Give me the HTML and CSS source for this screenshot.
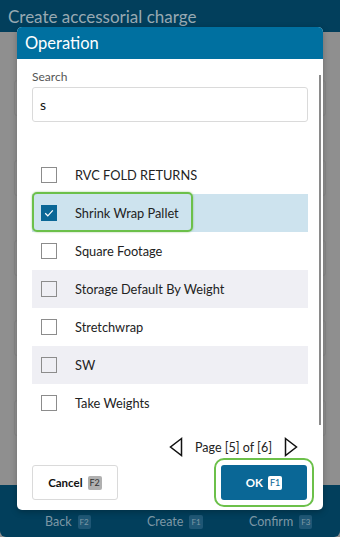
FILE: index.html
```html
<!DOCTYPE html>
<html lang="en">
<head>
<meta charset="UTF-8" />
<meta name="viewport" content="width=device-width, initial-scale=1" />
<title>Create accessorial charge</title>
<link rel="stylesheet" href="styles.css">
</head>
<body>

<div class="app">
  <header class="topbar">Create accessorial charge</header>
  <main class="page">
    <div class="ghost-field"></div>
    <div class="ghost-field"></div>
    <div class="ghost-field"></div>
    <div class="ghost-field"></div>
    <div class="ghost-field"></div>
  </main>
  <footer class="bottombar">
    <div class="nav-item"><span class="nav-dot"></span>Back <span class="nav-key">F2</span></div>
    <div class="nav-item"><span class="nav-dot"></span>Create <span class="nav-key">F1</span></div>
    <div class="nav-item"><span class="nav-dot"></span>Confirm <span class="nav-key">F3</span></div>
  </footer>
</div>

<div class="dialog">
  <div class="dialog-title">Operation</div>
  <div class="dialog-body">
    <div class="scrollbar"></div>
    <label class="field-label" for="search">Search</label>
    <input class="search" id="search" type="text" value="s">

    <ul class="options">
      <li class="option"><span class="box"></span>RVC FOLD RETURNS</li>
      <li class="option selected">
        <span class="box checked">
          <svg width="16" height="16" viewBox="0 0 16 16"><path d="M4.2 8.3 L6.8 10.8 L11.8 5.4" fill="none" stroke="#fff" stroke-width="1.2"/></svg>
        </span>Shrink Wrap Pallet
        <span class="focus-ring"></span>
      </li>
      <li class="option"><span class="box"></span>Square Footage</li>
      <li class="option alt"><span class="box"></span>Storage Default By Weight</li>
      <li class="option"><span class="box"></span>Stretchwrap</li>
      <li class="option alt"><span class="box"></span>SW</li>
      <li class="option"><span class="box"></span>Take Weights</li>
    </ul>

    <div class="pager">
      <svg width="14" height="20" viewBox="0 0 14 20"><path d="M12.5 1.5 L1.5 10 L12.5 18.5 Z" fill="none" stroke="#111" stroke-width="1.5" stroke-linejoin="miter"/></svg>
      <span class="pager-text">Page [5] of [6]</span>
      <svg width="14" height="20" viewBox="0 0 14 20"><path d="M1.5 1.5 L12.5 10 L1.5 18.5 Z" fill="none" stroke="#111" stroke-width="1.5" stroke-linejoin="miter"/></svg>
    </div>

    <div class="actions">
      <button class="btn btn-cancel">Cancel <span class="key key-grey">F2</span></button>
      <button class="btn btn-ok">OK <span class="key key-white">F1</span></button>
    </div>
  </div>
</div>

</body>
</html>
```

FILE: styles.css
```css
body { margin: 0; font-family: Lato, "Noto Sans", sans-serif; background: #8f8f8f; }
.app { width: 340px; height: 537px; display: flex; flex-direction: column; overflow: hidden; }
.topbar { height: 32px; background: #023f5c; color: #98a9b2; font-size: 17px; line-height: 34px; padding-left: 8px; box-sizing: border-box; white-space: nowrap; }
.page { flex: 1; background: #8f8f8f; display: flex; flex-direction: column; gap: 44px; padding: 48px 14px 0; }
.ghost-field { height: 34px; border: 1px solid #878787; border-radius: 3px; }
.bottombar { box-sizing: border-box; height: 52px; background: #023f5c; display: grid; grid-template-columns: 102px 102px 102px; align-items: end; padding: 0 0 8px 45px; border-radius: 0 0 6px 6px; }
.nav-item { position: relative; color: #7d97a5; font-size: 12.5px; display: flex; align-items: center; gap: 6px; white-space: nowrap; }
.nav-dot { position: absolute; left: 50%; top: -18px; width: 10px; height: 10px; margin-left: -12px; border-radius: 50%; background: #6f8b99; }
.nav-key { background: #1f5775; color: #7d97a5; font-size: 8px; padding: 2px 2px; border-radius: 2px; line-height: 10px; }

.dialog { position: absolute; left: 17px; top: 27px; width: 306px; height: 483px; background: #fff; border-radius: 5px; overflow: hidden; box-shadow: 0 2px 6px rgba(0,0,0,0.25); }
.dialog-title { height: 32px; background: #0070a0; color: #fff; font-size: 16.5px; line-height: 33px; padding-left: 8px; }
.dialog-body { position: relative; padding: 10px 15px 0; }
.scrollbar { position: absolute; right: 2px; top: 16px; width: 2px; height: 350px; background: #8a8a8a; }
.field-label { display: block; font-size: 12px; color: #555; line-height: 16px; }
.search { display: block; box-sizing: border-box; width: 276px; height: 35px; margin-top: 2px; border: 1px solid #dadada; border-radius: 3px; padding: 0 7px; font-family: inherit; font-size: 14px; color: #111; }
.options { list-style: none; margin: 34px 0 0; padding: 0; }
.option { position: relative; height: 38px; display: flex; align-items: center; font-size: 12.8px; color: #222; white-space: nowrap; }
.option.alt { background: #efeff4; }
.option.selected { background: #cde3ee; }
.box { width: 14px; height: 14px; border: 1px solid #8c8c8c; margin: 0 18px 0 9px; flex-shrink: 0; display: flex; }
.box.checked { background: #0a6796; border-color: #0a6796; }
.box.checked svg { margin: -1px; }
.focus-ring { position: absolute; left: 0; top: -2px; width: 157px; height: 36px; border: 2px solid #6cc04a; border-radius: 5px; box-shadow: 0 0 2px rgba(80,160,50,0.6); }
.pager { display: flex; justify-content: flex-end; align-items: center; gap: 12px; margin-top: 14px; padding-right: 10px; height: 22px; }
.pager-text { font-size: 12.5px; color: #222; }
.actions { display: flex; justify-content: space-between; margin-top: 7px; }
.btn { width: 86px; height: 35px; border-radius: 3px; font-family: inherit; font-weight: bold; font-size: 11.5px; display: flex; align-items: center; justify-content: center; gap: 5px; padding: 0; cursor: pointer; }
.btn-cancel { background: #fff; color: #111; border: 1px solid #dadada; }
.btn-ok { background: #0a6796; color: #fff; border: none; outline: 2px solid #6cc04a; outline-offset: 5px; margin-right: 1px; }
.key { font-size: 9px; font-weight: normal; line-height: 12px; padding: 1px 2px; border-radius: 2px; }
.key-grey { background: #b0b0b0; color: #333; }
.key-white { background: #fff; color: #0a6796; }
```
